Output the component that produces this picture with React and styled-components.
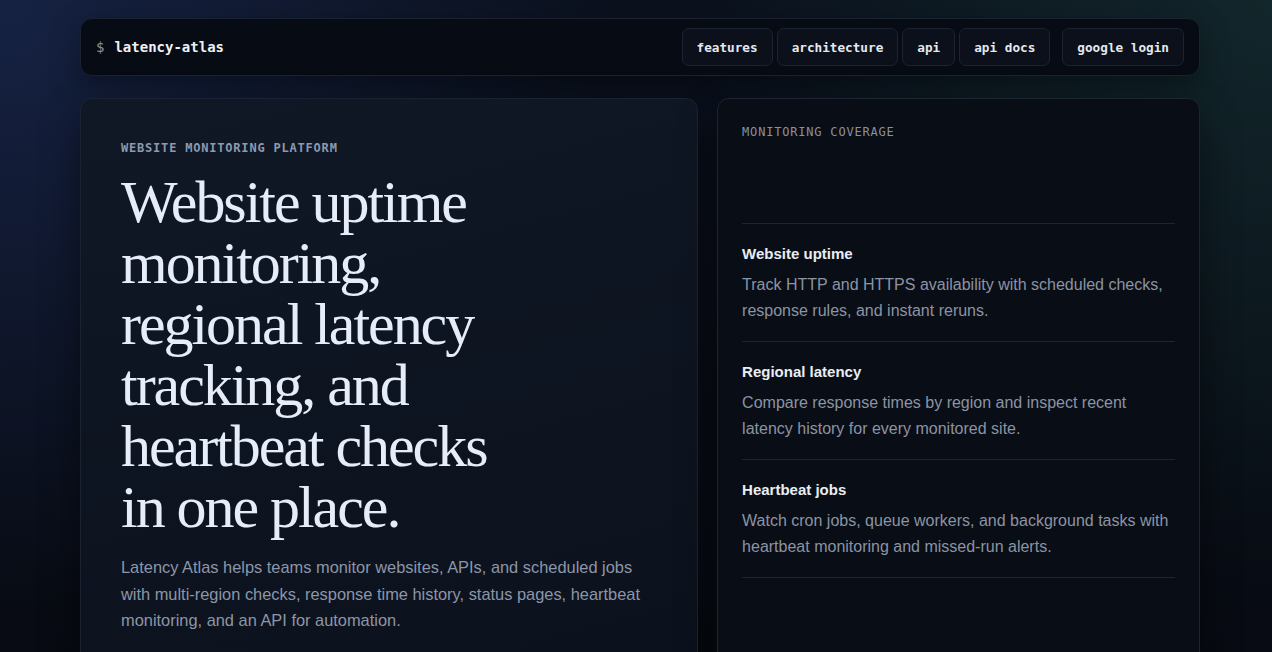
import React from "react";
import styled, { createGlobalStyle } from "styled-components";

const GlobalStyle = createGlobalStyle`
  html,
  body {
    margin: 0;
    min-height: 100%;
    background-color: #080c14;
  }

  body {
    background:
      radial-gradient(circle at 0% 0%, rgba(40, 62, 128, 0.38), transparent 42%),
      radial-gradient(circle at 100% 0%, rgba(34, 88, 72, 0.3), transparent 40%),
      linear-gradient(180deg, #0b111e 0%, #070a11 100%);
    color: #e6ebf4;
    font-family: "Liberation Sans", Arial, sans-serif;
  }
`;

const mono = `"DejaVu Sans Mono", "Liberation Mono", monospace`;

const Page = styled.div`
  width: 1120px;
  margin-left: 80px;
  padding-top: 18px;
  box-sizing: border-box;
`;

const Header = styled.header`
  display: flex;
  align-items: center;
  justify-content: space-between;
  padding: 9px 15px;
  background-color: #070b14;
  border: 1px solid #1a2130;
  border-radius: 12px;
  box-shadow: 0 10px 30px rgba(0, 0, 0, 0.35);
`;

const Brand = styled.div`
  display: flex;
  align-items: center;
  gap: 10px;
  font-family: ${mono};
  font-size: 14px;
  font-weight: 700;
  color: #eef1f6;
`;

const Prompt = styled.span`
  color: #8b93a3;
  font-weight: 400;
`;

const Actions = styled.div`
  display: flex;
  align-items: center;
  gap: 12px;
`;

const Nav = styled.nav`
  display: flex;
  gap: 4px;
`;

const NavButton = styled.a`
  display: flex;
  align-items: center;
  height: 38px;
  padding: 0 14px;
  box-sizing: border-box;
  background-color: #0b101a;
  border: 1px solid #1c2331;
  border-radius: 7px;
  font-family: ${mono};
  font-size: 12.7px;
  font-weight: 700;
  color: #e4e8ef;
  text-decoration: none;
  cursor: pointer;
`;

const Grid = styled.main`
  display: grid;
  grid-template-columns: 1.28fr 1fr;
  gap: 19px;
  margin-top: 22px;
`;

const Card = styled.section`
  padding: ${(props) => props.padding || "24px"};
  background: ${(props) => props.background || "#090d16"};
  border: 1px solid ${(props) => props.borderColor || "#1d2432"};
  border-radius: 12px;
  box-shadow: 0 18px 40px rgba(0, 0, 0, 0.45);
  box-sizing: border-box;
`;

const Eyebrow = styled.p`
  margin: 0 0 ${(props) => props.gapBelow || "16px"};
  font-family: ${mono};
  font-size: 12px;
  line-height: 16px;
  letter-spacing: 0.8px;
  font-weight: ${(props) => (props.bold ? 700 : 400)};
  color: ${(props) => props.color || "#8a94a6"};
`;

const Headline = styled.h1`
  max-width: 390px;
  margin: 0 0 16px;
  font-family: "Liberation Serif", "Times New Roman", serif;
  font-size: 60px;
  font-weight: 400;
  line-height: 61px;
  letter-spacing: -0.034em;
  color: #e6ecf8;
`;

const Lead = styled.p`
  margin: 0;
  font-size: 16.4px;
  line-height: 1.62;
  color: #8c96a8;
`;

const FeatureList = styled.ul`
  margin: 0;
  padding: 0;
  list-style: none;
  border-bottom: 1px solid #1e2530;
`;

const Feature = styled.li`
  padding: 19px 0 17px;
  border-top: 1px solid #1e2530;
`;

const FeatureTitle = styled.h3`
  margin: 0 0 7px;
  font-size: 15px;
  line-height: 22px;
  font-weight: 700;
  color: #e9edf3;
`;

const FeatureText = styled.p`
  margin: 0;
  font-size: 16px;
  line-height: 26px;
  color: #8b94a3;
`;

const features = [
  {
    title: "Website uptime",
    text: "Track HTTP and HTTPS availability with scheduled checks, response rules, and instant reruns.",
  },
  {
    title: "Regional latency",
    text: "Compare response times by region and inspect recent latency history for every monitored site.",
  },
  {
    title: "Heartbeat jobs",
    text: "Watch cron jobs, queue workers, and background tasks with heartbeat monitoring and missed-run alerts.",
  },
];

const navLinks = ["features", "architecture", "api", "api docs"];

export default function App() {
  return (
    <>
      <GlobalStyle />
      <Page>
        <Header>
          <Brand>
            <Prompt>$</Prompt>
            latency-atlas
          </Brand>
          <Actions>
            <Nav>
              {navLinks.map((link) => (
                <NavButton key={link}>{link}</NavButton>
              ))}
            </Nav>
            <NavButton>google login</NavButton>
          </Actions>
        </Header>

        <Grid>
          <Card
            padding="41px 40px 64px"
            background="linear-gradient(165deg, #101826 0%, #0b111c 100%)"
            borderColor="#1b2332"
          >
            <Eyebrow bold color="#8e99ad">
              WEBSITE MONITORING PLATFORM
            </Eyebrow>
            <Headline>
              Website uptime monitoring, regional latency tracking, and
              heartbeat checks in one place.
            </Headline>
            <Lead>
              Latency Atlas helps teams monitor websites, APIs, and scheduled
              jobs with multi-region checks, response time history, status
              pages, heartbeat monitoring, and an API for automation.
            </Lead>
          </Card>

          <Card padding="25px 24px 24px">
            <Eyebrow color="#89919f" gapBelow="83px">
              MONITORING COVERAGE
            </Eyebrow>
            <FeatureList>
              {features.map((item) => (
                <Feature key={item.title}>
                  <FeatureTitle>{item.title}</FeatureTitle>
                  <FeatureText>{item.text}</FeatureText>
                </Feature>
              ))}
            </FeatureList>
          </Card>
        </Grid>
      </Page>
    </>
  );
}
